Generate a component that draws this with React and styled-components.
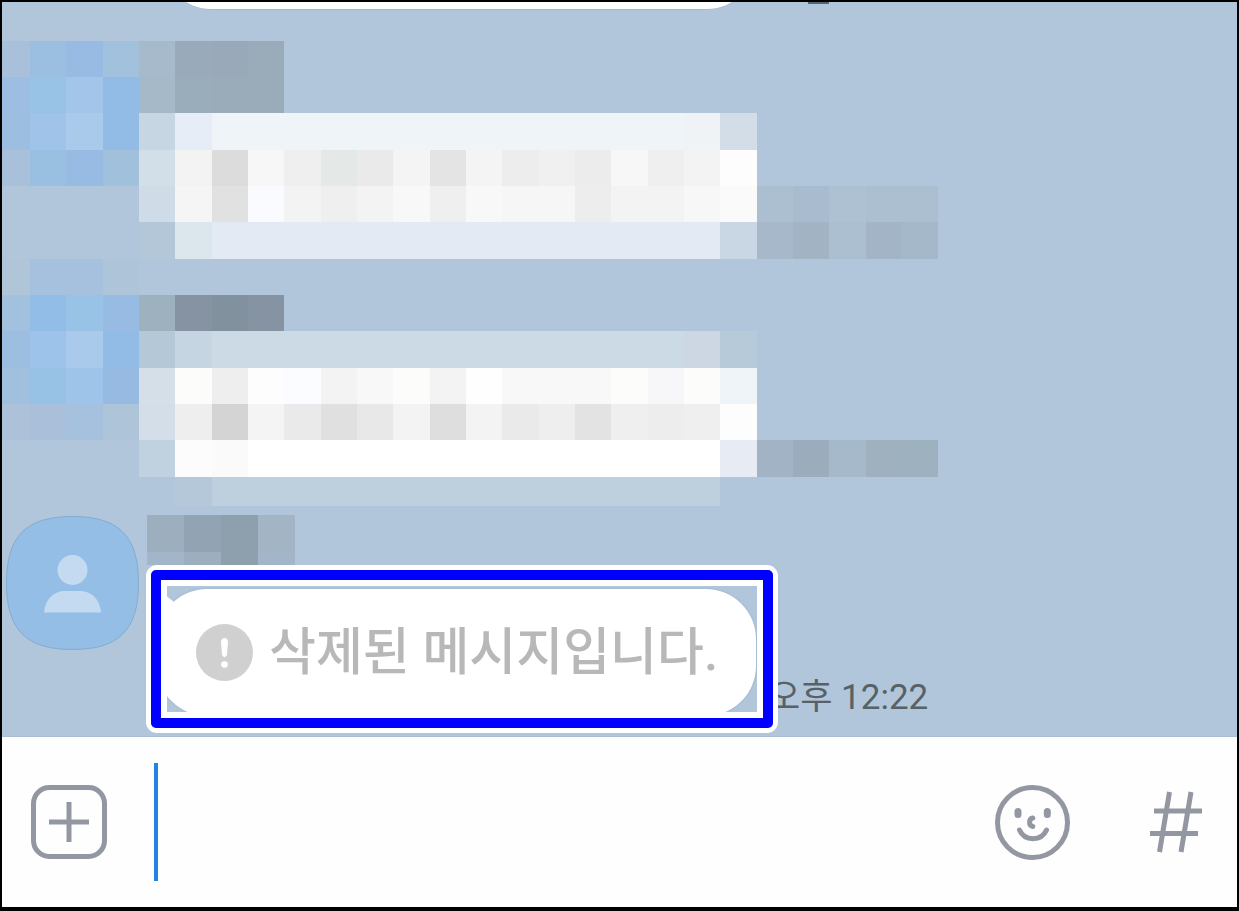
import React from "react";
import styled, { createGlobalStyle } from "styled-components";

const Global = createGlobalStyle`
  *, *::before, *::after { box-sizing: border-box; }
  body { margin: 0; background: #000; }
`;

const Screen = styled.div`
  display: flex;
  flex-direction: column;
  min-height: 100vh;
  border: 2px solid #000;
  border-bottom-width: 4px;
  background: #b1c6da;
  font-family: Roboto, "Noto Sans CJK KR", sans-serif;
`;

const Chat = styled.main`
  flex: 1;
  overflow: hidden;
  border-bottom: 1px solid #a9bed2;
`;

const ClippedRow = styled.div`
  display: flex;
  align-items: flex-end;
  gap: 53px;
  height: 8px;
  padding-left: 161px;
  overflow: hidden;
`;

const ClippedBubble = styled.div`
  width: 592px;
  height: 120px;
  flex: none;
  border-radius: 48px;
  background: #fff;
  border-bottom: 1px solid #a3b8cb;
`;

const ClippedTime = styled.div`
  align-self: flex-start;
  width: 21px;
  height: 2px;
  background: #56626c;
`;

const Mosaic = styled.div`
  display: grid;
  grid-template-columns: 28px repeat(8, 36px 37px 36px) 36px;
  grid-template-rows: repeat(4, 36px 36px 37px) 29px;
  margin-top: 31px;
`;

const NameMosaic = styled.div`
  display: grid;
  grid-template-columns: repeat(4, 37px);
  grid-template-rows: 37px 13px;
`;

const Cell = styled.span`
  grid-column: span ${(p) => p.$span};
  background: ${(p) => (p.$color ? `#${p.$color}` : "transparent")};
`;

const Message = styled.section`
  display: flex;
  gap: 8px;
  margin-top: 9px;
  padding: 0 4px 20px;
`;

const Avatar = styled.svg`
  flex: none;
  width: 133px;
  height: 136px;
`;

const Body = styled.div`
  flex: 1;
  min-width: 0;
`;

const BubbleLine = styled.div`
  display: flex;
  align-items: flex-end;
  gap: 12px;
  margin-top: 24px;
  padding-left: 10px;
`;

const Bubble = styled.div`
  position: relative;
  display: flex;
  align-items: center;
  gap: 16px;
  flex: none;
  width: 599px;
  height: 127px;
  padding-left: 39px;
  border-radius: 50px;
  background: #fff;
  box-shadow: 0 0 2px #8fa5ba;
`;

const Tail = styled.svg`
  position: absolute;
  left: -7px;
  top: -6px;
  width: 26px;
  height: 40px;
`;

const Highlight = styled.div`
  position: absolute;
  inset: -24px -22px -17px -11px;
  border: 5px solid #fff;
  border-radius: 11px;

  &::before, &::after {
    content: "";
    position: absolute;
    border-style: solid;
  }
  &::before {
    inset: 0;
    border-width: 10px;
    border-color: #00f;
    border-radius: 5px;
  }
  &::after {
    inset: 10px;
    border-width: 6px;
    border-color: #fff;
  }
`;

const Notice = styled.p`
  margin: 0;
  color: #b8b8b8;
  font-size: 51px;
  font-weight: 500;
  line-height: 60px;
  white-space: nowrap;
`;

const Time = styled.time`
  color: #566168;
  font-size: 35px;
  line-height: 36px;
  white-space: nowrap;
`;

const Composer = styled.form`
  display: flex;
  align-items: center;
  height: 170px;
  padding: 0 32px 0 27px;
  background: #fefefe;
`;

const Field = styled.input`
  flex: 1;
  min-width: 0;
  height: 118px;
  margin: 0 40px 0 43px;
  padding: 0 12px;
  border: 0;
  border-left: 4px solid #2084e0;
  outline: 0;
  background: transparent;
  color: #222;
  font: 48px Roboto, "Noto Sans CJK KR", sans-serif;
`;

const IconButton = styled.button`
  display: block;
  flex: none;
  width: ${(p) => p.$width}px;
  height: 82px;
  margin-left: ${(p) => p.$gap || 0}px;
  padding: 0;
  border: 0;
  background: none;

  svg {
    display: block;
    width: 100%;
    height: 100%;
    fill: none;
    stroke: #9297a1;
    stroke-width: 5;
  }
`;

/* Each run is "colour*span"; a dash leaves the chat background visible. */
const historyRows = [
  "a9c0da 9abfe1 97bbe2 a2c1dd a7bacb 99aaba 99a9b9 9aacba -*18",
  "9dbee2 98c2e6 a4c5ea 92bbe5 a6b9c9 9aadbb 9aabb9 9aacba -*18",
  "9cbee1 a0c4e9 a9caea 92bbe5 c6d6e2 e7edf6 eff4f8*13 eff3f6 d2dde8 -*5",
  "a9c0da 99bfe1 97bbe2 a1c0dc d2dee8 f3f3f3 dcdcdc f7f7f7 efefef e4e8e7 eaeaea f4f4f4 e4e4e4 f4f4f4 ededed f0f0f0 ececec f7f7f7 efefef f3f3f3 fdfdfd -*5",
  "-*4 cfdce7 f5f5f5 e1e1e1 fafbfe f3f3f3 efefef f3f3f3 f8f8f8 efefef f8f8f8 f6f6f6*2 ededed f3f3f3*2 f7f7f7 fafafa abbfd0 a9bccf adc1d2 abbfd0*2",
  "-*4 b3c7d8 dce6ed e4eaf3*14 c8d7e3 a6b8ca a2b4c4 abbfd0 a2b4c5 a5b8c9",
  "b0c5d8 a6c1de*2 aec5d9 -*22",
  "a2c1de 92bde6 98c2e6 97bbe3 9eb1bf 8593a2 82919e 8593a2 -*18",
  "9cbee1 9dc3ea aacaeb 92bbe5 b5c8d8 c5d5e1 ccdae5*13 ccd7e3 b7cada -*5",
  "a1c0dd 98c2e5 9fc4e9 96bae1 d4dfe8 fcfdfb eeeeee fdfdfd fafcff f3f3f3 f8f8f8 fcfdfb f3f3f3 fefefe f8f8f8*3 fcfdfb f7f7f9 fcfdfb eff4f8 -*5",
  "adc2d9 aac0da a5c1de aec5d9 d4dee8 eeeeee d4d4d4 f4f4f4 eaeaea e0e0e0 e8e8e8 f3f3f3 dedede f3f3f3 eaeaea eeeeee e3e3e3 efefef ededed efefef fdfdfd -*5",
  "-*4 c0d2df fcfcfc fafafa ffffff*13 e7ecf4 a1b3c4 9badbc a6b9ca 9fb1bf 9eb1bf",
  "-*5 b5c8da bed0de*14 -*6",
];

const nameRows = [
  "9dafbe 92a3b3 8e9fad a3b5c4",
  "a3b6c9 9dafbe 8e9fad a3b6c9",
];

function Cells({ rows }) {
  return rows.flatMap((row, y) =>
    row.split(" ").map((run, x) => {
      const [color, span] = run.split("*");
      return (
        <Cell key={`${y}-${x}`} $color={color === "-" ? "" : color} $span={span || 1} />
      );
    })
  );
}

export default function App() {
  return (
    <>
      <Global />
      <Screen>
        <Chat>
          <ClippedRow>
            <ClippedBubble />
            <ClippedTime />
          </ClippedRow>
          <Mosaic aria-hidden="true">
            <Cells rows={historyRows} />
          </Mosaic>
          <Message>
            <Avatar viewBox="0 0 133 136" aria-hidden="true">
              <path
                d="M66.500 1.500C112 1.500 132.500 20 132.500 68S112 134.500 66.500 134.500S.5 116 .5 68S21 1.500 66.500 1.500Z"
                fill="#94bee6"
                stroke="#84abd1"
              />
              <circle cx="66.500" cy="55" r="15" fill="#c4daf1" />
              <path d="M38 97.500C39 84 48 76 59 76H74C85 76 94 84 95 97.500Z" fill="#c4daf1" />
            </Avatar>
            <Body>
              <NameMosaic aria-hidden="true">
                <Cells rows={nameRows} />
              </NameMosaic>
              <BubbleLine>
                <Bubble>
                  <Tail viewBox="0 0 26 40" aria-hidden="true">
                    <path d="M0 0L24 19L14 40L0 24Z" fill="#fff" />
                  </Tail>
                  <svg width="57" height="57" viewBox="0 0 57 57" aria-hidden="true">
                    <circle cx="28.500" cy="28.500" r="28.500" fill="#d0d0d0" />
                    <path
                      d="M25 18C25 12.500 32 12.500 32 18L31 30C30.500 34 26.500 34 26 30Z"
                      fill="#fff"
                    />
                    <circle cx="28.500" cy="40.500" r="3.300" fill="#fff" />
                  </svg>
                  <Notice>삭제된 메시지입니다.</Notice>
                  <Highlight />
                </Bubble>
                <Time>오후 12:22</Time>
              </BubbleLine>
            </Body>
          </Message>
        </Chat>
        <Composer onSubmit={(e) => e.preventDefault()}>
          <IconButton type="button" aria-label="첨부" $width={82}>
            <svg viewBox="0 0 82 82">
              <rect x="4.500" y="6.500" width="71" height="69" rx="16" />
              <path d="M20 41H60M40 21V61" />
            </svg>
          </IconButton>
          <Field type="text" aria-label="메시지 입력" />
          <IconButton type="button" aria-label="이모티콘" $width={82}>
            <svg viewBox="0 0 82 82">
              <circle cx="41.500" cy="41.500" r="35" />
              <g strokeLinecap="round">
                <path d="M27 30.500V33.500M56.300 30.500V33.500" strokeWidth="7" />
                <path d="M41.800 37C37.500 38 37.500 44.500 41.800 45.500" />
                <path d="M28.500 49C33.500 60.500 50.500 60.500 55.500 49" />
              </g>
            </svg>
          </IconButton>
          <IconButton type="button" aria-label="샵 검색" $width={60} $gap={72}>
            <svg viewBox="0 0 60 82">
              <path d="M24.500 11L14.500 71M46 11L36 71M9 30H57M5 52.500H53" />
            </svg>
          </IconButton>
        </Composer>
      </Screen>
    </>
  );
}
